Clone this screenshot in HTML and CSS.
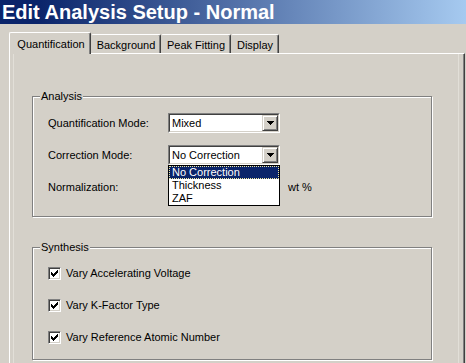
FILE: index.html
```
<!DOCTYPE html>
<html>
<head>
<meta charset="utf-8">
<title>Edit Analysis Setup - Normal</title>
<link rel="stylesheet" href="styles.css">
</head>
<body>
<div class="window">
  <div class="titlebar">Edit Analysis Setup - Normal</div>
  <div class="tabs">
    <div class="tab active">Quantification</div>
    <div class="tab w70">Background</div>
    <div class="tab w70">Peak Fitting</div>
    <div class="tab w48">Display</div>
  </div>
  <div class="panel">
    <div class="page">
      <div class="group analysis">
        <span class="legend">Analysis</span>
        <div class="row">
          <span class="label">Quantification Mode:</span>
          <div class="combo"><div class="combo-in"><span class="value">Mixed</span><span class="btn"><svg width="7" height="4" viewBox="0 0 7 4" shape-rendering="crispEdges"><path d="M0 0h7v1h-7zM1 1h5v1h-5zM2 2h3v1h-3zM3 3h1v1h-1z" fill="#000"/></svg></span></div></div>
        </div>
        <div class="row">
          <span class="label">Correction Mode:</span>
          <div class="combo open"><div class="combo-in"><span class="value">No Correction</span><span class="btn"><svg width="7" height="4" viewBox="0 0 7 4" shape-rendering="crispEdges"><path d="M0 0h7v1h-7zM1 1h5v1h-5zM2 2h3v1h-3zM3 3h1v1h-1z" fill="#000"/></svg></span></div>
            <div class="dropdown">
              <div class="item selected">No Correction</div>
              <div class="item">Thickness</div>
              <div class="item">ZAF</div>
            </div>
          </div>
        </div>
        <div class="row">
          <span class="label">Normalization:</span>
          <div class="edit"><div class="edit-in"></div></div>
          <span class="unit">wt %</span>
        </div>
      </div>
      <div class="group synthesis">
        <span class="legend">Synthesis</span>
        <label class="check"><span class="box"><svg width="7" height="7" viewBox="0 0 7 7" shape-rendering="crispEdges"><path d="M6 0h1v1h-1zM5 1h2v1h-2zM0 2h1v1h-1zM4 2h3v1h-3zM0 3h2v1h-2zM3 3h3v1h-3zM0 4h5v1h-5zM1 5h3v1h-3zM2 6h1v1h-1z" fill="#000"/></svg></span><span class="ctext">Vary Accelerating Voltage</span></label>
        <label class="check"><span class="box"><svg width="7" height="7" viewBox="0 0 7 7" shape-rendering="crispEdges"><path d="M6 0h1v1h-1zM5 1h2v1h-2zM0 2h1v1h-1zM4 2h3v1h-3zM0 3h2v1h-2zM3 3h3v1h-3zM0 4h5v1h-5zM1 5h3v1h-3zM2 6h1v1h-1z" fill="#000"/></svg></span><span class="ctext">Vary K-Factor Type</span></label>
        <label class="check"><span class="box"><svg width="7" height="7" viewBox="0 0 7 7" shape-rendering="crispEdges"><path d="M6 0h1v1h-1zM5 1h2v1h-2zM0 2h1v1h-1zM4 2h3v1h-3zM0 3h2v1h-2zM3 3h3v1h-3zM0 4h5v1h-5zM1 5h3v1h-3zM2 6h1v1h-1z" fill="#000"/></svg></span><span class="ctext">Vary Reference Atomic Number</span></label>
      </div>
    </div>
  </div>
</div>
</body>
</html>
```
FILE: styles.css
```
* { box-sizing: border-box; }
html, body { margin: 0; padding: 0; }
body {
  width: 466px;
  height: 363px;
  overflow: hidden;
  background: #d4d0c8;
  font-family: "Liberation Sans", Arial, sans-serif;
  font-size: 11px;
  color: #000;
}
.window { width: 466px; height: 363px; }
.titlebar {
  height: 24px;
  line-height: 24px;
  padding-left: 2px;
  background: linear-gradient(to right, #0a246a 0%, #0a246a 8%, #a6caf0 100%);
  color: #fff;
  font-weight: bold;
  font-size: 20px;
  white-space: nowrap;
}
.tabs {
  display: flex;
  align-items: flex-end;
  height: 21px;
  margin-top: 8px;
  padding-left: 9px;
  position: relative;
  z-index: 2;
}
.tab {
  height: 19px;
  border-top: 1px solid #fff;
  border-left: 1px solid #fff;
  border-right: 1px solid #404040;
  box-shadow: inset -1px 0 0 #808080;
  border-top-left-radius: 2px;
  border-top-right-radius: 2px;
  text-align: center;
  line-height: 13px;
  padding-top: 4px;
  white-space: nowrap;
  background: #d4d0c8;
}
.tab.active {
  width: 82px;
  height: 22px;
  margin-bottom: -1px;
  padding-top: 5px;
  padding-left: 2px;
}
.tab.w70 { width: 70px; border-left-color: #d4d0c8; }
.tab.w48 { width: 48px; border-left-color: #d4d0c8; }
.panel {
  margin-left: 9px;
  width: 456px;
  height: 310px;
  border-top: 1px solid #fff;
  border-left: 1px solid #fff;
  border-right: 1px solid #404040;
  box-shadow: inset -1px 0 0 #808080;
  padding-left: 3px;
  padding-right: 5px;
}
.page {
  height: 100%;
  border-left: 1px solid #e2dfd8;
  border-right: 1px solid #e2dfd8;
  padding-top: 42px;
  padding-left: 18px;
}
.group {
  position: relative;
  width: 400px;
  border: 1px solid #808080;
  box-shadow: inset 1px 1px 0 #fff, 1px 1px 0 #fff;
}
.legend {
  position: absolute;
  top: -7px;
  left: 7px;
  padding: 0 1px;
  line-height: 13px;
  background: #d4d0c8;
}
.analysis {
  height: 121px;
  padding-top: 16px;
  padding-left: 15px;
  display: flex;
  flex-direction: column;
  gap: 12px;
}
.row {
  display: flex;
  align-items: center;
  height: 20px;
}
.label { width: 120px; white-space: nowrap; }
.combo, .edit {
  position: relative;
  width: 112px;
  height: 20px;
  border: 1px solid;
  border-color: #808080 #fff #fff #808080;
}
.combo-in, .edit-in {
  height: 100%;
  border: 1px solid;
  border-color: #404040 #d4d0c8 #d4d0c8 #404040;
  background: #fff;
  display: flex;
  align-items: center;
}
.value { flex: 1; padding-left: 2px; white-space: nowrap; }
.edit-in { padding-left: 2px; }
.btn {
  width: 16px;
  height: 16px;
  border: 1px solid;
  border-color: #d4d0c8 #404040 #404040 #d4d0c8;
  box-shadow: inset 1px 1px 0 #fff, inset -1px -1px 0 #808080;
  background: #d4d0c8;
  display: flex;
  align-items: center;
  justify-content: center;
}
.btn svg { display: block; }
.dropdown {
  position: absolute;
  top: 19px;
  left: -1px;
  width: 112px;
  border: 1px solid #000;
  background: #fff;
  z-index: 5;
}
.item {
  height: 13px;
  line-height: 13px;
  padding-left: 3px;
  white-space: nowrap;
}
.item.selected {
  background: #0a246a;
  color: #fff;
  outline: 1px dotted #f0e8a0;
  outline-offset: -1px;
}
.unit { margin-left: 8px; }
.synthesis {
  height: 113px;
  margin-top: 30px;
  padding-top: 19px;
  padding-left: 15px;
  display: flex;
  flex-direction: column;
  gap: 19px;
}
.check {
  display: flex;
  align-items: center;
  height: 13px;
}
.box {
  width: 13px;
  height: 13px;
  border: 1px solid;
  border-color: #808080 #fff #fff #808080;
  box-shadow: inset 1px 1px 0 #404040, inset -1px -1px 0 #d4d0c8;
  background: #fff;
  padding: 2px 0 0 2px;
}
.box svg { display: block; }
.ctext { margin-left: 5px; white-space: nowrap; line-height: 13px; }
```
